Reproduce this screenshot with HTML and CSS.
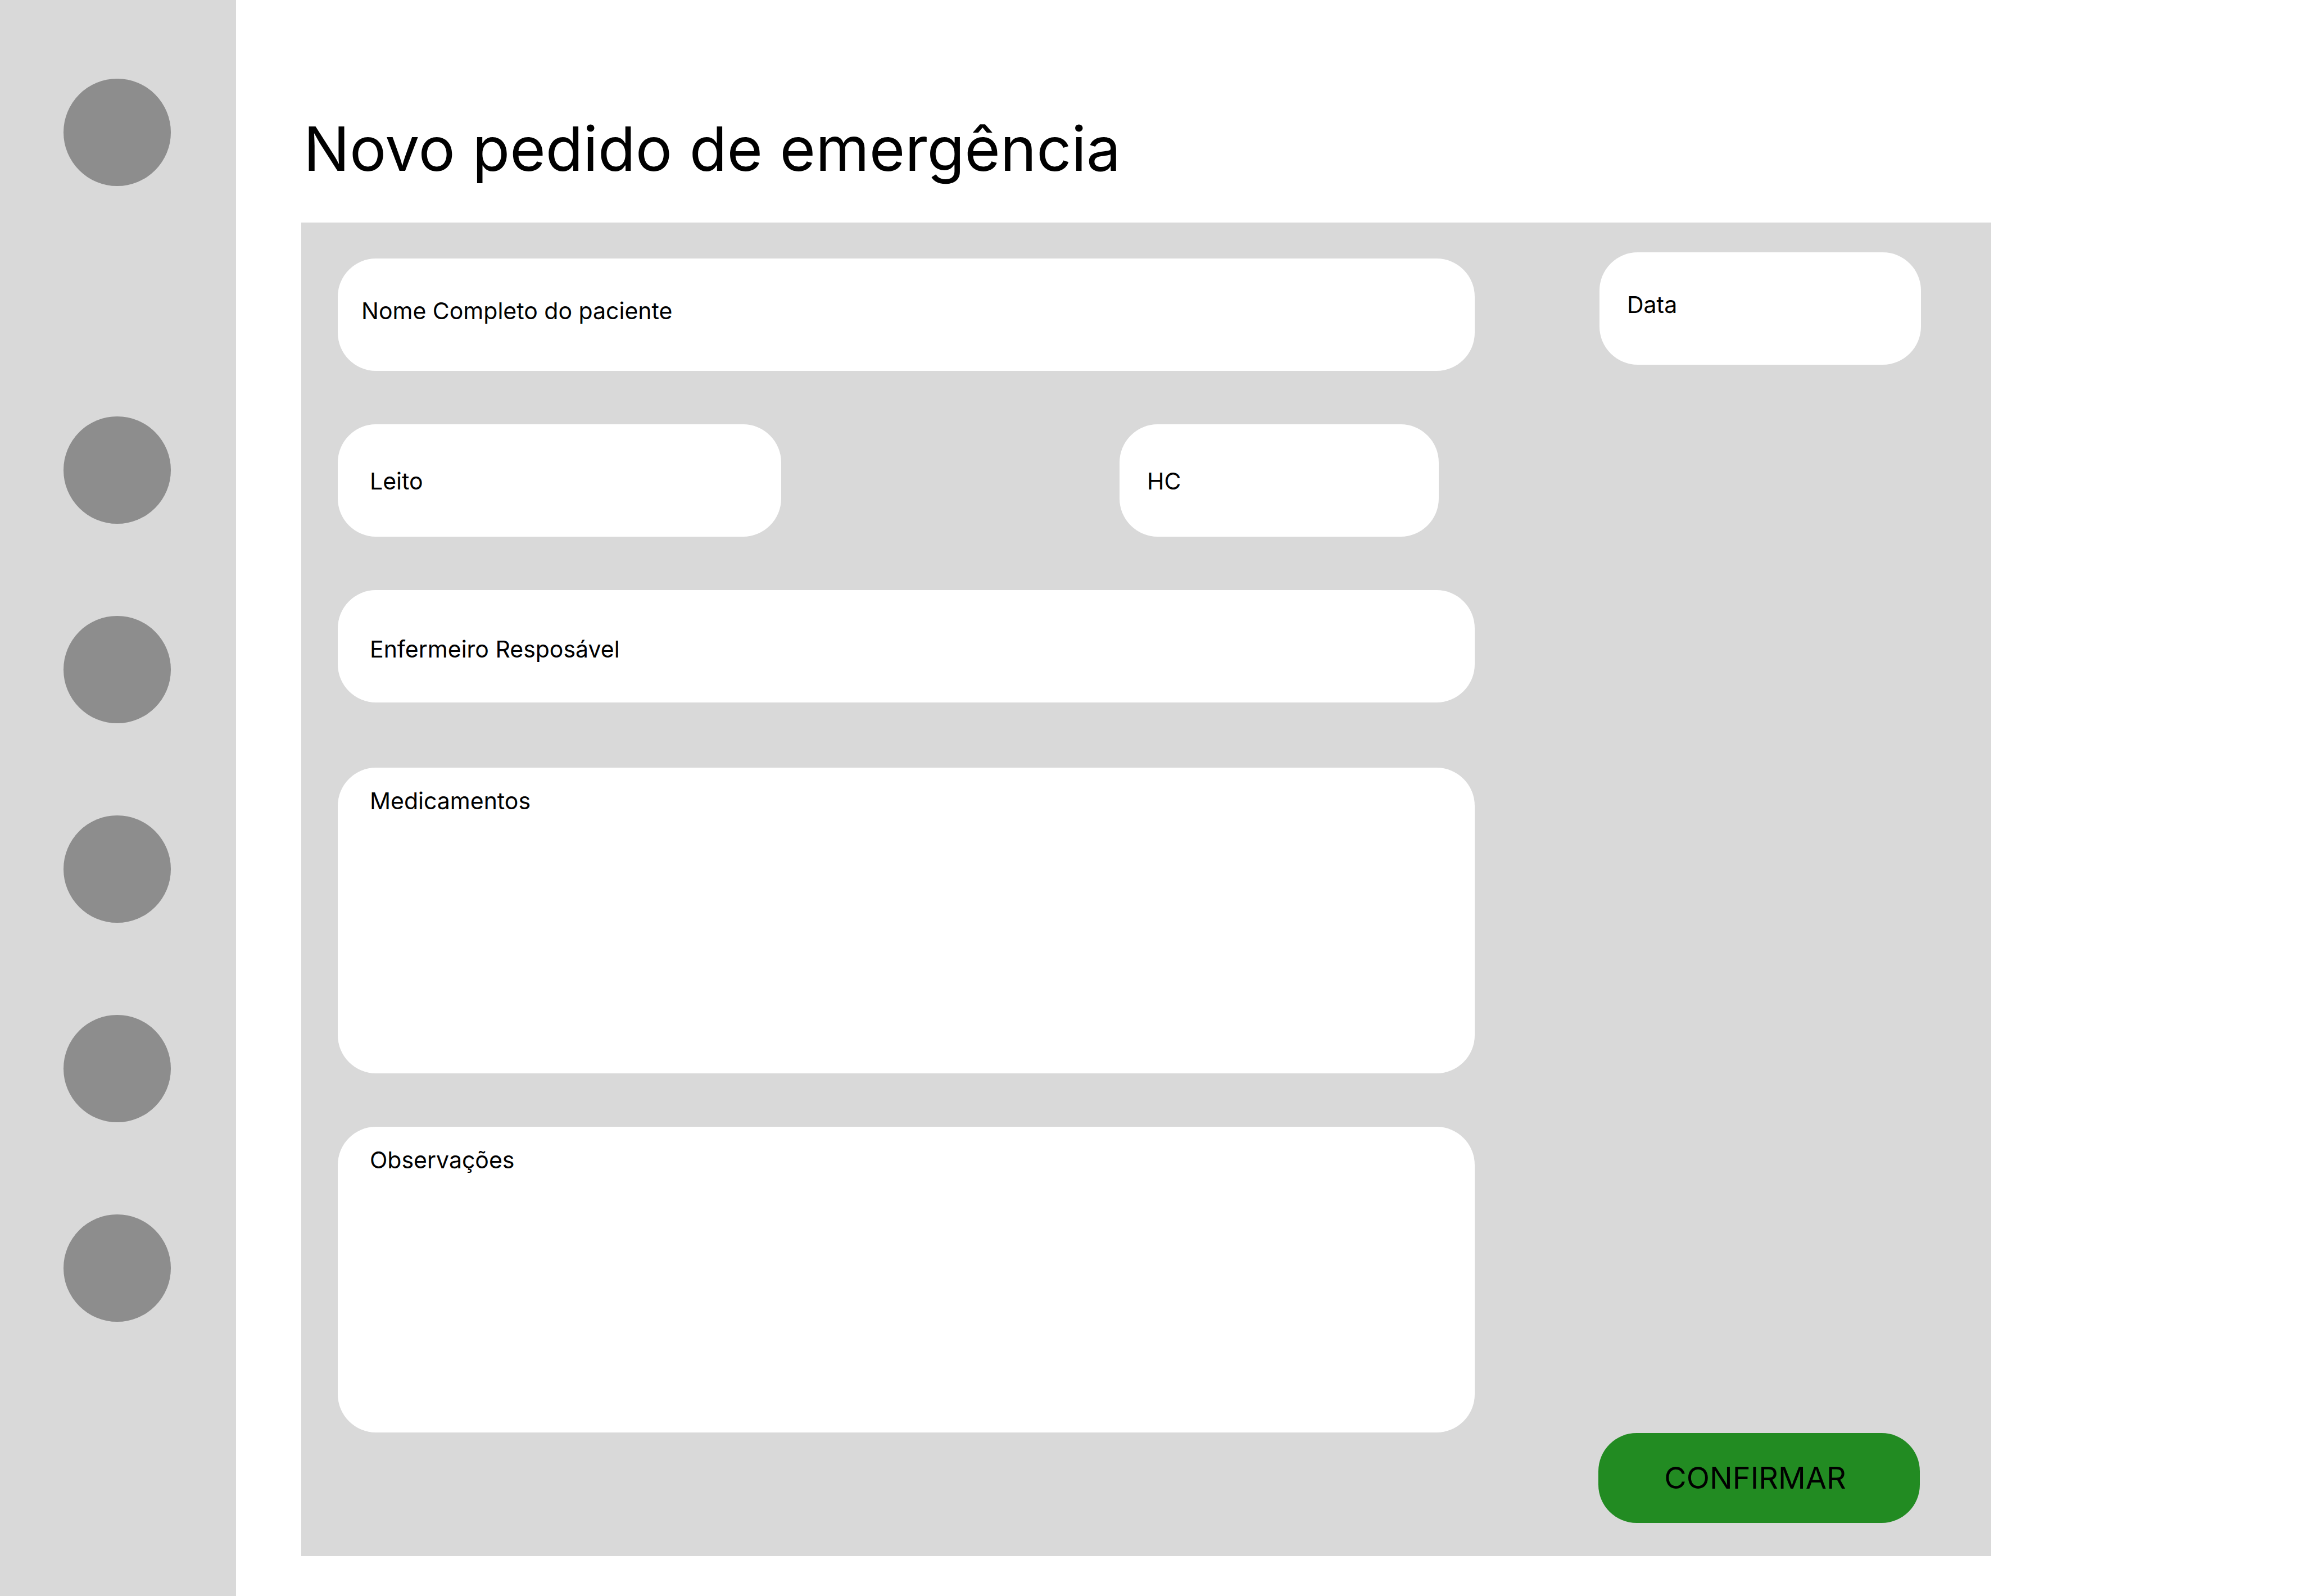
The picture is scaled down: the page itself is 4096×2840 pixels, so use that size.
FILE: index.html
```html
<!DOCTYPE html>
<html lang="pt-BR">
<head>
  <meta charset="utf-8">
  <meta name="viewport" content="width=device-width, initial-scale=1">
  <title>Novo pedido de emergência</title>
  <link rel="stylesheet" href="styles.css">
</head>
<body>
  <div class="app">
    <nav class="sidebar" aria-label="Menu principal">
      <button class="sidebar-item sidebar-item-profile" type="button" aria-label="Perfil"></button>
      <button class="sidebar-item" type="button" aria-label="Início"></button>
      <button class="sidebar-item" type="button" aria-label="Pedidos"></button>
      <button class="sidebar-item" type="button" aria-label="Pacientes"></button>
      <button class="sidebar-item" type="button" aria-label="Medicamentos"></button>
      <button class="sidebar-item" type="button" aria-label="Configurações"></button>
    </nav>

    <main class="content">
      <h1 class="title">Novo pedido de emergência</h1>

      <form class="panel">
        <div class="fields">
          <label class="field field-patient">
            <span>Nome Completo do paciente</span>
            <input class="control" type="text" name="paciente">
          </label>
          <div class="field-row">
            <label class="field field-bed">
              <span>Leito</span>
              <input class="control" type="text" name="leito">
            </label>
            <label class="field field-record">
              <span>HC</span>
              <input class="control" type="text" name="hc">
            </label>
          </div>
          <label class="field field-nurse">
            <span>Enfermeiro Resposável</span>
            <input class="control" type="text" name="enfermeiro">
          </label>
          <label class="field field-area field-drugs">
            <span>Medicamentos</span>
            <textarea class="control" name="medicamentos"></textarea>
          </label>
          <label class="field field-area">
            <span>Observações</span>
            <textarea class="control" name="observacoes"></textarea>
          </label>
        </div>

        <div class="side">
          <label class="field field-date">
            <span>Data</span>
            <input class="control" type="text" name="data">
          </label>
          <button class="confirm" type="submit">CONFIRMAR</button>
        </div>
      </form>
    </main>
  </div>
</body>
</html>
```
FILE: styles.css
```css
* {
  box-sizing: border-box;
}

body {
  margin: 0;
  background: #fff;
  color: #000;
  font-family: Inter, "Liberation Sans", sans-serif;
  font-size: 41px;
  line-height: 50px;
}

.app {
  display: flex;
  min-height: 100vh;
}

/* Sidebar */

.sidebar {
  display: flex;
  flex: 0 0 420px;
  flex-direction: column;
  align-items: center;
  gap: 164px;
  padding: 140px 3px 140px 0;
  background: #d9d9d9;
}

.sidebar-item {
  flex: none;
  width: 191px;
  height: 191px;
  padding: 0;
  border: 0;
  border-radius: 50%;
  background: #8d8d8d;
  cursor: pointer;
}

.sidebar-item-profile {
  margin-bottom: 246px;
}

/* Content */

.content {
  flex: 1;
  min-width: 0;
  padding: 198px 553px 71px 116px;
}

.title {
  margin: 0 0 66px;
  padding-left: 4px;
  font-size: 109px;
  font-weight: 400;
  line-height: 132px;
}

.panel {
  display: grid;
  grid-template-columns: minmax(0, 1fr) 574px;
  column-gap: 220px;
  padding: 53px 125px 59px 65px;
  background: #d9d9d9;
}

.fields {
  display: flex;
  flex-direction: column;
  gap: 95px;
  padding: 11px 0 161px;
}

.field-row {
  display: grid;
  grid-template-columns: minmax(0, 789fr) minmax(0, 568fr);
  column-gap: 602px;
  padding-right: 64px;
}

/* Fields */

.field {
  display: flex;
  align-items: flex-start;
  gap: 24px;
  height: 200px;
  padding: 76px 48px 0 57px;
  border-radius: 68px;
  background: #fff;
  cursor: text;
}

.field span {
  flex: none;
}

.field-patient {
  padding-top: 68px;
  padding-left: 42px;
}

.field-record {
  padding-left: 49px;
}

.field-nurse {
  padding-top: 80px;
}

.field-date {
  align-self: flex-end;
  width: 572px;
  padding-top: 68px;
  padding-left: 49px;
}

.field-area {
  height: 544px;
  padding-top: 34px;
  padding-bottom: 34px;
}

.field-drugs {
  margin-top: 21px;
}

.control {
  flex: 1;
  min-width: 0;
  height: 50px;
  padding: 0;
  border: 0;
  outline: 0;
  background: transparent;
  color: inherit;
  font: inherit;
  resize: none;
}

.field-area .control {
  height: 100%;
}

/* Date and confirmation column */

.side {
  display: flex;
  flex-direction: column;
  align-items: flex-start;
  justify-content: space-between;
}

.confirm {
  width: 572px;
  height: 160px;
  padding: 0 14px 0 0;
  border: 0;
  border-radius: 68px;
  background: #228b22;
  color: #000;
  font-family: inherit;
  font-size: 54px;
  line-height: 66px;
  cursor: pointer;
}
```
